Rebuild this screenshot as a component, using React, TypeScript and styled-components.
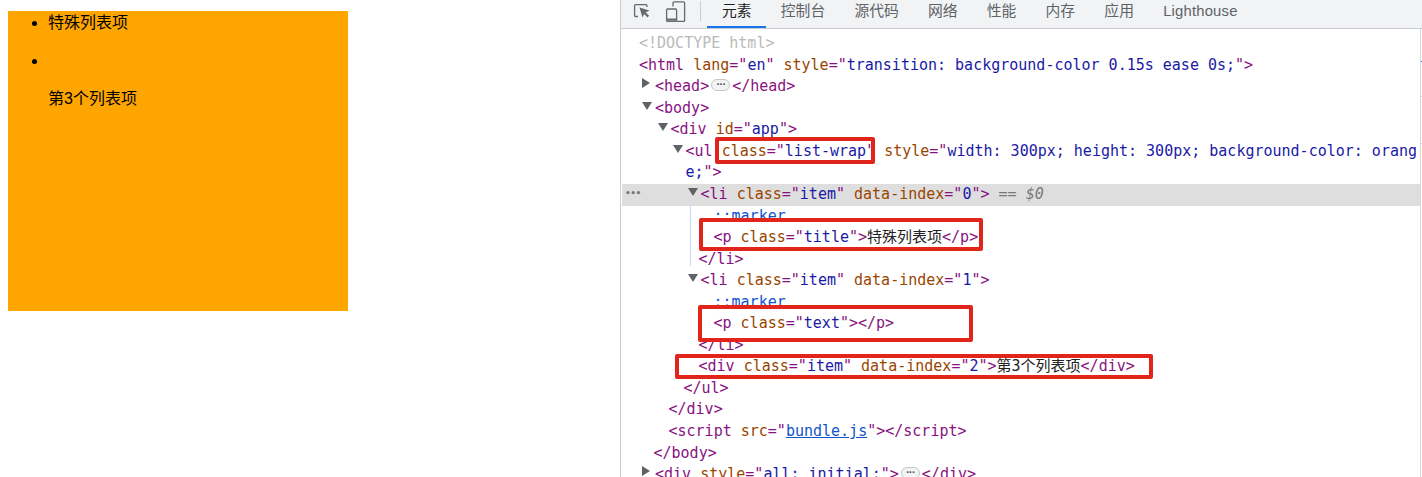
import React from "react";
import styled, { createGlobalStyle } from "styled-components";

const Global = createGlobalStyle`
  html, body { margin: 0; padding: 0; background: #fff; height: 100%; overflow: hidden; }
  #root { height: 477px; }
`;

const Page = styled.div`
  display: flex;
  width: 1422px;
  height: 477px;
  overflow: hidden;
`;

const Preview = styled.div`
  width: 620px;
  flex: none;
  padding: 11px 0 0 8px;
  box-sizing: border-box;
  font: 16px/22px "Liberation Sans", "Noto Sans CJK SC", sans-serif;
  color: #000;
`;

const ListWrap = styled.ul`
  width: 300px;
  height: 299px;
  margin: 0;
  padding: 1px 0 0 40px;
  background: orange;
`;

const ListItem = styled.li`
  margin-bottom: 16px;
  height: 22px;
`;

const PlainItem = styled.div`
  height: 22px;
`;

const DevTools = styled.div`
  position: relative;
  flex: 1;
  border-left: 1px solid #cbcdd1;
  min-width: 0;
`;

const TabBar = styled.div`
  display: flex;
  align-items: stretch;
  height: 28px;
  background: #f1f3f4;
  border-bottom: 1px solid #cacdd1;
  padding-left: 12px;
`;

const ToolIcon = styled.svg`
  flex: none;
  align-self: flex-start;
  margin-top: 1px;
  color: #666a6e;
`;

const DeviceIcon = styled(ToolIcon)`
  margin-left: 14px;
`;

const Separator = styled.div`
  width: 1px;
  height: 20px;
  margin: 1px 6.4px 0 13px;
  background: #ccc;
`;

const Tab = styled.div<{ $active?: boolean; $latin?: boolean }>`
  padding: 1px 14.6px 0;
  height: 25px;
  font: 14.8px/21px "Liberation Sans", "Noto Sans CJK SC", sans-serif;
  letter-spacing: ${(p) => (p.$latin ? "0.2px" : "0")};
  color: ${(p) => (p.$active ? "#202124" : "#5f6368")};
  border-bottom: ${(p) => (p.$active ? "2px solid #1a73e8" : "2px solid transparent")};
`;

const Tree = styled.div`
  margin-right: 1px;
  border-right: 1px solid #d5d7da;
  height: 448px;
  padding-top: 4.2px;
  box-sizing: border-box;
  font: 15px/21.55px "DejaVu Sans Mono", "Noto Sans CJK SC", monospace;
  color: #222;
`;

const Row = styled.div<{ $left: number; $selected?: boolean }>`
  position: relative;
  padding-left: ${(p) => p.$left}px;
  white-space: pre-wrap;
  word-break: break-all;
  background: ${(p) => (p.$selected ? "#dedede" : "transparent")};
  margin-left: 1px;
`;

const Tag = styled.span`
  color: #881280;
`;
const Attr = styled.span`
  color: #994500;
`;
const Val = styled.span`
  color: #1a1aa6;
`;
const Pseudo = styled.span`
  color: #1155cc;
`;
const Muted = styled.span`
  color: #bababa;
`;
const Link = styled.span`
  color: #1155cc;
  text-decoration: underline;
`;
const Hint = styled.span`
  color: #777;
  font-style: italic;
`;
const Plain = styled.span`
  color: #777;
`;

const Arrow = styled.span<{ $open?: boolean }>`
  display: inline-block;
  width: 0;
  height: 0;
  margin-left: -13px;
  margin-right: ${(p) => (p.$open ? "3px" : "5px")};
  vertical-align: 3px;
  ${(p) =>
    p.$open
      ? "border-left: 5px solid transparent; border-right: 5px solid transparent; border-top: 8px solid #5f6368;"
      : "border-top: 5px solid transparent; border-bottom: 5px solid transparent; border-left: 8px solid #5f6368;"}
`;

const Pill = styled.span`
  display: inline-block;
  box-sizing: border-box;
  width: 19px;
  height: 12px;
  margin: 0 2px;
  border: 1px solid #c4c6c9;
  border-radius: 6px;
  background: #f1f3f4;
  color: #555;
  font: 700 9px/8px "DejaVu Sans", sans-serif;
  letter-spacing: -0.5px;
  text-align: center;
  vertical-align: 0;
  overflow: hidden;
`;

const RowDots = styled.span`
  position: absolute;
  left: 3px;
  top: -1px;
  color: #777;
  font: 700 9px/21.6px "DejaVu Sans", sans-serif;
  letter-spacing: -0.5px;
`;

const Guide = styled.div`
  position: absolute;
  left: 69px;
  top: 203px;
  width: 1px;
  height: 63px;
  background: #c6dafc;
`;

const Tick = styled.div<{ $y: number; $color: string }>`
  position: absolute;
  right: 0;
  top: ${(p) => p.$y}px;
  width: 1px;
  height: 1px;
  background: ${(p) => p.$color};
`;

const Callout = styled.div<{ $x: number; $y: number; $w: number; $h: number }>`
  position: absolute;
  left: ${(p) => p.$x}px;
  top: ${(p) => p.$y}px;
  width: ${(p) => p.$w}px;
  height: ${(p) => p.$h}px;
  box-sizing: border-box;
  border: 4px solid #e1251b;
  border-radius: 2px;
`;

const TABS = ["元素", "控制台", "源代码", "网络", "性能", "内存", "应用", "Lighthouse"];

export default function App() {
  return (
    <Page>
      <Global />
      <Preview>
        <ListWrap>
          <ListItem>特殊列表项</ListItem>
          <ListItem />
          <PlainItem>第3个列表项</PlainItem>
        </ListWrap>
      </Preview>
      <DevTools>
        <TabBar>
          <ToolIcon width="18" height="18" viewBox="0 0 18 18" fill="none" stroke="currentColor" strokeWidth="1.3">
            <path d="M5 15.5H2.6a1 1 0 0 1-1-1V4.6a1 1 0 0 1 1-1h10.3a1 1 0 0 1 1 1V6" />
            <path d="M6.5 6.5l3 10 1.7-3.5 3.3 3.4 1.6-1.6-3.3-3.4 3.6-1.8z" fill="currentColor" stroke="none" />
          </ToolIcon>
          <DeviceIcon width="22" height="22" viewBox="0 0 22 22" fill="none" stroke="currentColor" strokeWidth="1.3">
            <path d="M8 5.5V1.8a1 1 0 0 1 1-1h9.6a1 1 0 0 1 1 1v17.6a1 1 0 0 1-1 1H12" />
            <rect x="1.6" y="8" width="10" height="12.4" rx="1" />
            <path d="M1.6 18.6h10" strokeWidth="2.2" />
          </DeviceIcon>
          <Separator />
          {TABS.map((t, i) => (
            <Tab key={t} $active={i === 0} $latin={t === "Lighthouse"}>
              {t}
            </Tab>
          ))}
        </TabBar>
        <Tree>
          <Row $left={17}>
            <Muted>{"<!DOCTYPE html>"}</Muted>
          </Row>
          <Row $left={17}>
            <Tag>{"<html"}</Tag> <Attr>lang</Attr><Tag>="</Tag><Val>en</Val><Tag>"</Tag> <Attr>style</Attr><Tag>="</Tag>
            <Val>transition: background-color 0.15s ease 0s;</Val><Tag>{'">'}</Tag>
          </Row>
          <Row $left={33}>
            <Arrow />
            <Tag>{"<head>"}</Tag><Pill>···</Pill><Tag>{"</head>"}</Tag>
          </Row>
          <Row $left={33}>
            <Arrow $open />
            <Tag>{"<body>"}</Tag>
          </Row>
          <Row $left={48.5}>
            <Arrow $open />
            <Tag>{"<div"}</Tag> <Attr>id</Attr><Tag>="</Tag><Val>app</Val><Tag>{'">'}</Tag>
          </Row>
          <Row $left={63.5}>
            <Arrow $open />
            <Tag>{"<ul"}</Tag> <Attr>class</Attr><Tag>="</Tag><Val>list-wrap</Val><Tag>"</Tag> <Attr>style</Attr><Tag>="</Tag>
            <Val>width: 300px; height: 300px; background-color: orange;</Val><Tag>{'">'}</Tag>
          </Row>
          <Row $left={78.5} $selected>
            <RowDots>•••</RowDots>
            <Arrow $open />
            <Tag>{"<li"}</Tag> <Attr>class</Attr><Tag>="</Tag><Val>item</Val><Tag>"</Tag> <Attr>data-index</Attr><Tag>="</Tag>
            <Val>0</Val><Tag>{'">'}</Tag> <Plain>==</Plain> <Hint>$0</Hint>
          </Row>
          <Row $left={91.5}>
            <Pseudo>::marker</Pseudo>
          </Row>
          <Row $left={91.5}>
            <Tag>{"<p"}</Tag> <Attr>class</Attr><Tag>="</Tag><Val>title</Val><Tag>{'">'}</Tag>特殊列表项<Tag>{"</p>"}</Tag>
          </Row>
          <Row $left={76.5}>
            <Tag>{"</li>"}</Tag>
          </Row>
          <Row $left={78.5}>
            <Arrow $open />
            <Tag>{"<li"}</Tag> <Attr>class</Attr><Tag>="</Tag><Val>item</Val><Tag>"</Tag> <Attr>data-index</Attr><Tag>="</Tag>
            <Val>1</Val><Tag>{'">'}</Tag>
          </Row>
          <Row $left={91.5}>
            <Pseudo>::marker</Pseudo>
          </Row>
          <Row $left={91.5}>
            <Tag>{"<p"}</Tag> <Attr>class</Attr><Tag>="</Tag><Val>text</Val><Tag>{'">'}</Tag><Tag>{"</p>"}</Tag>
          </Row>
          <Row $left={76.5}>
            <Tag>{"</li>"}</Tag>
          </Row>
          <Row $left={76.5}>
            <Tag>{"<div"}</Tag> <Attr>class</Attr><Tag>="</Tag><Val>item</Val><Tag>"</Tag> <Attr>data-index</Attr><Tag>="</Tag>
            <Val>2</Val><Tag>{'">'}</Tag>第3个列表项<Tag>{"</div>"}</Tag>
          </Row>
          <Row $left={61.5}>
            <Tag>{"</ul>"}</Tag>
          </Row>
          <Row $left={46.5}>
            <Tag>{"</div>"}</Tag>
          </Row>
          <Row $left={46.5}>
            <Tag>{"<script"}</Tag> <Attr>src</Attr><Tag>="</Tag><Link>bundle.js</Link><Tag>{'">'}</Tag><Tag>{"</script>"}</Tag>
          </Row>
          <Row $left={31.5}>
            <Tag>{"</body>"}</Tag>
          </Row>
          <Row $left={33}>
            <Arrow />
            <Tag>{"<div"}</Tag> <Attr>style</Attr><Tag>="</Tag><Val>all: initial;</Val><Tag>{'">'}</Tag><Pill>···</Pill><Tag>{"</div>"}</Tag>
          </Row>
        </Tree>
        <Guide />
        <Tick $y={61} $color="#1a73e8" />
        <Tick $y={96} $color="#d5d7da" />
        <Tick $y={143} $color="#d5d7da" />
        <Callout $x={94} $y={137} $w={160} $h={27} />
        <Callout $x={78} $y={218} $w={284} $h={33} />
        <Callout $x={77} $y={305} $w={275} $h={37} />
        <Callout $x={54} $y={354} $w={478} $h={25} />
      </DevTools>
    </Page>
  );
}
